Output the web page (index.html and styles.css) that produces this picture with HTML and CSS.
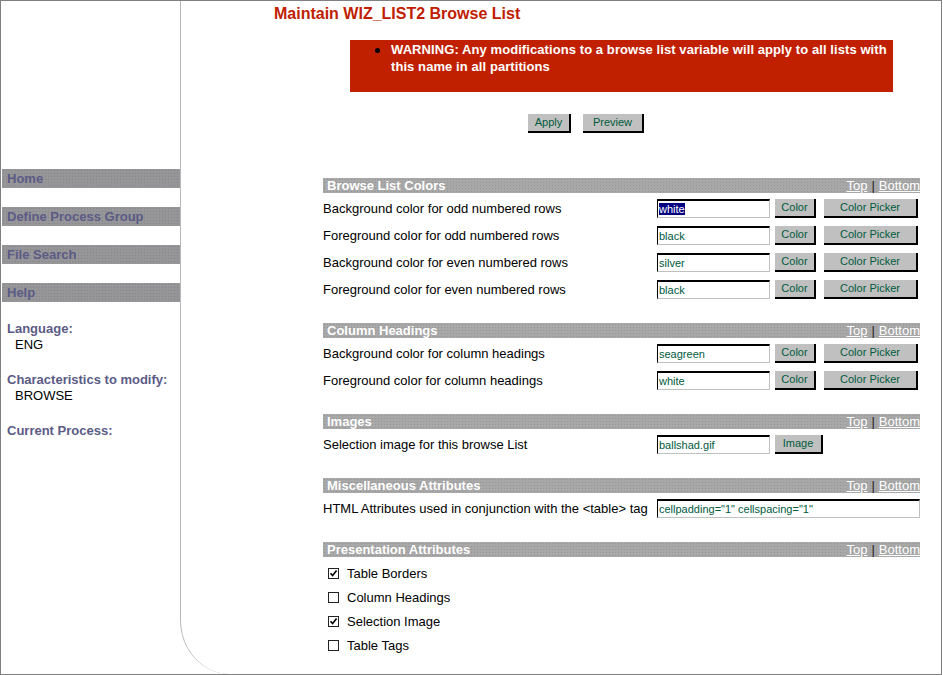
FILE: index.html
```html
<!DOCTYPE html>
<html>
<head>
<meta charset="utf-8">
<title>Maintain WIZ_LIST2 Browse List</title>
<link rel="stylesheet" href="styles.css">
</head>
<body>
<div class="frame">
  <aside class="sidebar">
    <nav class="nav">
      <a class="nav-item" href="#">Home</a>
      <a class="nav-item" href="#">Define Process Group</a>
      <a class="nav-item" href="#">File Search</a>
      <a class="nav-item" href="#">Help</a>
    </nav>
    <div class="info">
      <div class="info-block"><div class="info-label">Language:</div><div class="info-value">ENG</div></div>
      <div class="info-block"><div class="info-label">Characteristics to modify:</div><div class="info-value">BROWSE</div></div>
      <div class="info-block"><div class="info-label">Current Process:</div></div>
    </div>
  </aside>
  <main class="main">
    <h1 class="title">Maintain WIZ_LIST2 Browse List</h1>
    <div class="warning">
      <ul class="warning-list">
        <li>WARNING: Any modifications to a browse list variable will apply to all lists with<br>this name in all partitions</li>
      </ul>
    </div>
    <div class="actions">
      <button class="btn btn-apply">Apply</button>
      <button class="btn btn-preview">Preview</button>
    </div>
    <div class="sections">
      <section class="section">
        <div class="sec-head"><span class="sec-title">Browse List Colors</span><span class="sec-links"><a href="#">Top</a><span class="sep">|</span><a href="#">Bottom</a></span></div>
        <div class="row"><span class="label">Background color for odd numbered rows</span><span class="textbox"><span class="selected">white</span></span><button class="btn btn-color">Color</button><button class="btn btn-picker">Color Picker</button></div>
        <div class="row"><span class="label">Foreground color for odd numbered rows</span><span class="textbox">black</span><button class="btn btn-color">Color</button><button class="btn btn-picker">Color Picker</button></div>
        <div class="row"><span class="label">Background color for even numbered rows</span><span class="textbox">silver</span><button class="btn btn-color">Color</button><button class="btn btn-picker">Color Picker</button></div>
        <div class="row"><span class="label">Foreground color for even numbered rows</span><span class="textbox">black</span><button class="btn btn-color">Color</button><button class="btn btn-picker">Color Picker</button></div>
      </section>
      <section class="section">
        <div class="sec-head"><span class="sec-title">Column Headings</span><span class="sec-links"><a href="#">Top</a><span class="sep">|</span><a href="#">Bottom</a></span></div>
        <div class="row"><span class="label">Background color for column headings</span><span class="textbox">seagreen</span><button class="btn btn-color">Color</button><button class="btn btn-picker">Color Picker</button></div>
        <div class="row"><span class="label">Foreground color for column headings</span><span class="textbox">white</span><button class="btn btn-color">Color</button><button class="btn btn-picker">Color Picker</button></div>
      </section>
      <section class="section">
        <div class="sec-head"><span class="sec-title">Images</span><span class="sec-links"><a href="#">Top</a><span class="sep">|</span><a href="#">Bottom</a></span></div>
        <div class="row"><span class="label">Selection image for this browse List</span><span class="textbox">ballshad.gif</span><button class="btn btn-image">Image</button></div>
      </section>
      <section class="section">
        <div class="sec-head"><span class="sec-title">Miscellaneous Attributes</span><span class="sec-links"><a href="#">Top</a><span class="sep">|</span><a href="#">Bottom</a></span></div>
        <div class="row"><span class="label">HTML Attributes used in conjunction with the &lt;table&gt; tag</span><span class="textbox textbox-wide">cellpadding="1" cellspacing="1"</span></div>
      </section>
      <section class="section">
        <div class="sec-head"><span class="sec-title">Presentation Attributes</span><span class="sec-links"><a href="#">Top</a><span class="sep">|</span><a href="#">Bottom</a></span></div>
        <div class="checks">
          <label class="check-row"><span class="checkbox checked"><svg viewBox="0 0 9 9" width="9" height="9"><path d="M1.5 4.2 L3.6 6.5 L7.6 1.6" fill="none" stroke="#000" stroke-width="1.6"/></svg></span>Table Borders</label>
          <label class="check-row"><span class="checkbox"></span>Column Headings</label>
          <label class="check-row"><span class="checkbox checked"><svg viewBox="0 0 9 9" width="9" height="9"><path d="M1.5 4.2 L3.6 6.5 L7.6 1.6" fill="none" stroke="#000" stroke-width="1.6"/></svg></span>Selection Image</label>
          <label class="check-row"><span class="checkbox"></span>Table Tags</label>
        </div>
      </section>
    </div>
  </main>
</div>
</body>
</html>
```

FILE: styles.css
```css
html, body {
  margin: 0;
  padding: 0;
  background: #fff;
}
body {
  font-family: "Liberation Sans", Arial, sans-serif;
  font-size: 13px;
  color: #000;
}
.frame {
  width: 940px;
  height: 673px;
  border: 1px solid #808080;
  display: flex;
  overflow: hidden;
}
.sidebar {
  width: 179px;
  flex: none;
  padding-top: 168px;
  box-sizing: border-box;
}
.nav {
  display: flex;
  flex-direction: column;
  gap: 19px;
  padding-left: 1px;
}
.nav-item {
  display: block;
  height: 19px;
  line-height: 19px;
  padding-left: 5px;
  font-weight: bold;
  font-size: 13px;
  color: #5b5b86;
  text-decoration: none;
  background-color: #969698;
  background-image: radial-gradient(circle, #85858c 0.8px, transparent 1px);
  background-size: 3px 3px;
}
.info {
  padding-left: 6px;
  padding-top: 19px;
  display: flex;
  flex-direction: column;
  gap: 19px;
}
.info-block {
  line-height: 16px;
}
.info-label {
  font-weight: bold;
  color: #5b5b86;
}
.info-value {
  padding-left: 8px;
}
.main {
  flex: 1;
  border-left: 1px solid #b8b8b8;
  border-bottom-left-radius: 50px 54px;
  display: flex;
  flex-direction: column;
  align-items: flex-start;
}
.title {
  margin: 3px 0 0 93px;
  font-size: 16px;
  line-height: 20px;
  font-weight: bold;
  color: #c02000;
}
.warning {
  margin: 16px 0 0 169px;
  width: 543px;
  height: 52px;
  box-sizing: border-box;
  background: #c02000;
  padding-top: 1px;
}
.warning-list {
  margin: 0;
  padding: 0 0 0 41px;
  color: #fff;
  font-weight: bold;
  font-size: 13px;
  line-height: 17px;
  letter-spacing: 0.08px;
  list-style: none;
  white-space: nowrap;
}
.warning-list li {
  position: relative;
}
.warning-list li::before {
  content: "";
  position: absolute;
  left: -16px;
  top: 7px;
  width: 5px;
  height: 5px;
  border-radius: 50%;
  background: #000;
}
.actions {
  margin: 22px 0 0 347px;
  display: flex;
  gap: 12px;
}
.btn {
  font-family: "Liberation Sans", Arial, sans-serif;
  font-size: 11px;
  color: #005a3c;
  background: #c0c0c0;
  border: 0;
  border-right: 2px solid #000;
  border-bottom: 2px solid #000;
  border-radius: 0;
  padding: 0;
  height: 19px;
  line-height: 17px;
  box-sizing: border-box;
  margin: 0;
  text-align: center;
}
.btn-apply { width: 43px; }
.btn-preview { width: 61px; }
.sections {
  margin: 45px 0 0 142px;
  width: 597px;
  display: flex;
  flex-direction: column;
  gap: 22px;
}
.sec-head {
  height: 15px;
  display: flex;
  justify-content: space-between;
  align-items: center;
  background-color: #a8a8a8;
  background-image: radial-gradient(circle, #959595 0.8px, transparent 1px);
  background-size: 3px 3px;
  overflow: hidden;
}
.sec-title {
  padding-left: 4px;
  color: #fff;
  font-weight: bold;
  font-size: 13px;
  line-height: 15px;
}
.sec-links {
  font-size: 13px;
  line-height: 15px;
  display: flex;
  gap: 4px;
}
.sec-links a {
  color: #fff;
  text-decoration: underline;
}
.sep {
  color: #202020;
}
.row {
  height: 27px;
  box-sizing: border-box;
  padding: 4px 0 0;
  display: flex;
  align-items: center;
}
.label {
  width: 334px;
  flex: none;
  white-space: nowrap;
}
.textbox {
  width: 113px;
  height: 19px;
  box-sizing: border-box;
  border: 1px solid;
  border-color: #000 #c0c0c0 #c0c0c0 #000;
  border-top-width: 2px;
  font-size: 11px;
  line-height: 16px;
  color: #005a3c;
  padding-left: 1px;
  white-space: nowrap;
  overflow: hidden;
  flex: none;
}
.textbox-wide {
  width: 263px;
}
.selected {
  background: #000080;
  color: #fff;
}
.btn-color {
  width: 41px;
  margin-left: 5px;
}
.btn-picker {
  width: 94px;
  margin-left: 8px;
}
.btn-image {
  width: 48px;
  margin-left: 5px;
}
.checks {
  padding-top: 4px;
  display: flex;
  flex-direction: column;
}
.check-row {
  height: 24px;
  display: flex;
  align-items: center;
  padding-left: 5px;
}
.checkbox {
  width: 11px;
  height: 11px;
  box-sizing: border-box;
  border: 1px solid #222;
  margin-right: 8px;
  display: flex;
  align-items: center;
  justify-content: center;
  background: #fff;
}
.checkbox svg {
  display: block;
}
```
